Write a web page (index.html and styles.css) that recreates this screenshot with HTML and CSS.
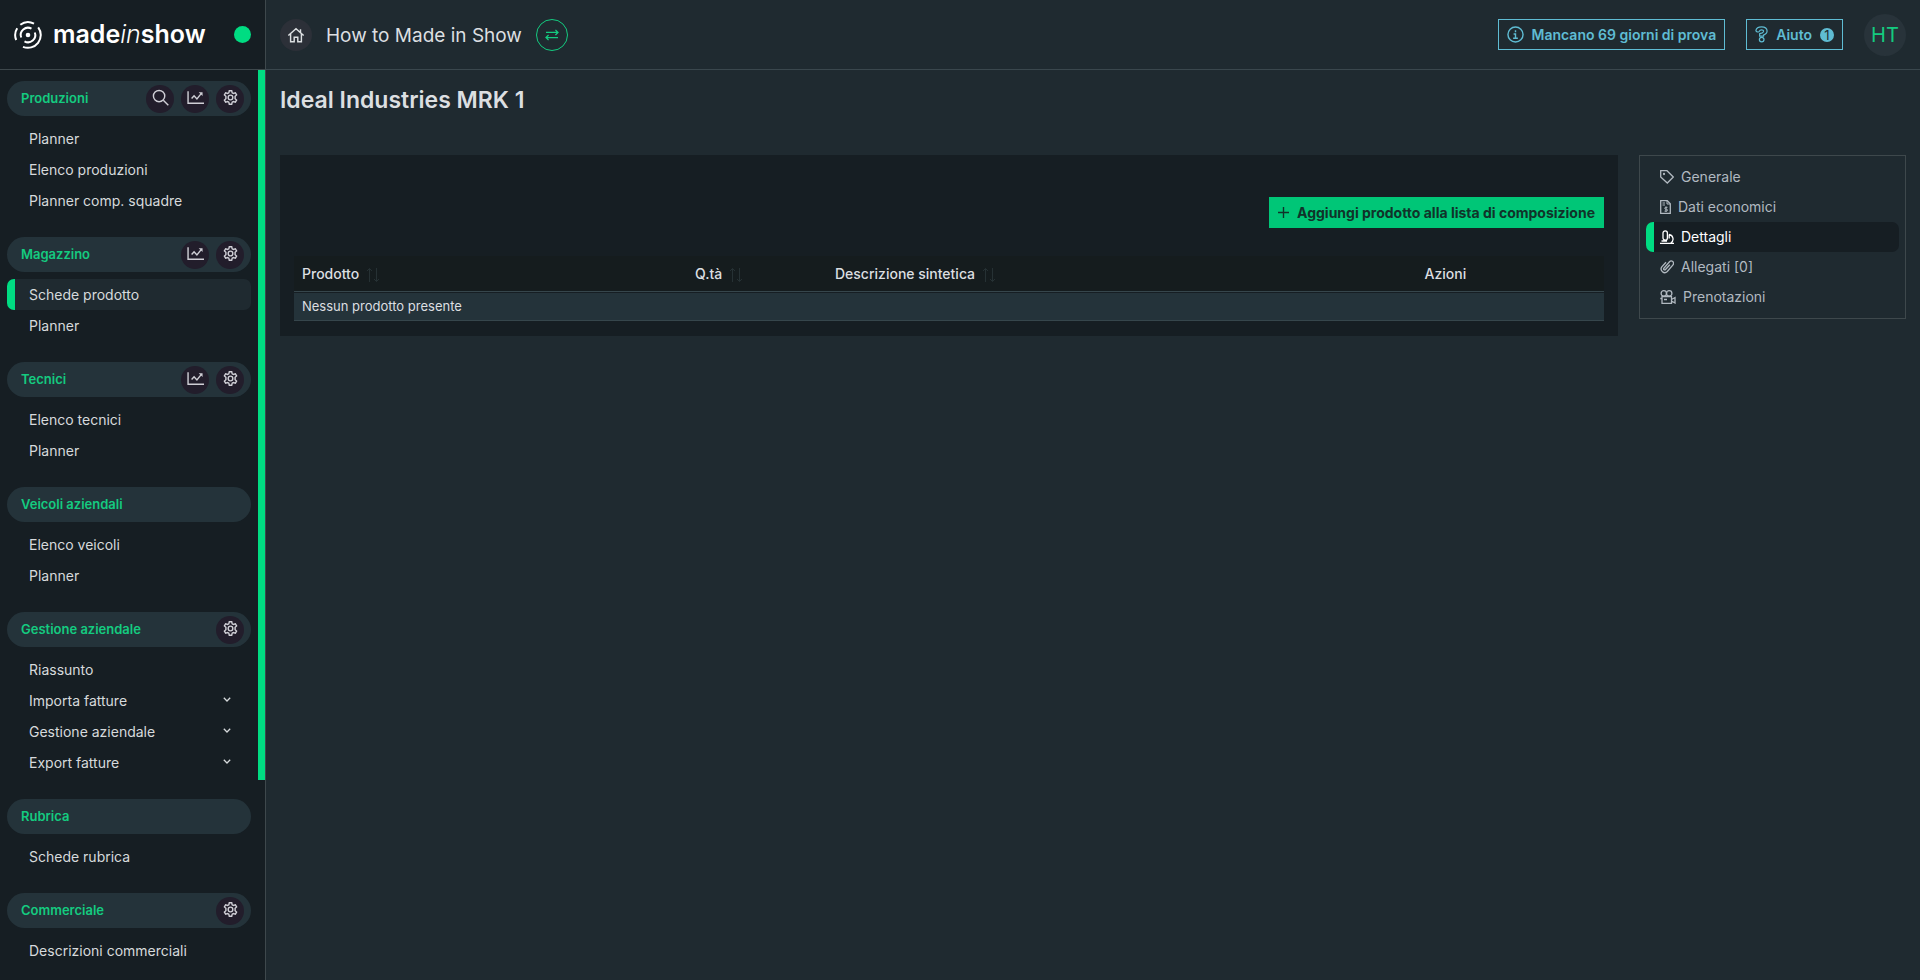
FILE: index.html
```html
<!DOCTYPE html>
<html lang="it">
<head>
  <meta charset="UTF-8">
  <title>Ideal Industries MRK 1 - madeinshow</title>
  <meta name="viewport" content="width=device-width, initial-scale=1.0">
  <link rel="stylesheet" href="styles.css">
</head>
<body>

<!-- icons used more than once -->
<svg class="sprite" aria-hidden="true">
  <symbol id="i-gear" viewBox="0 0 24 24">
    <path d="M10.300 2.500h3.400l.7 2.900 1.600.9 2.900-.9 1.700 2.900-2.100 2.100v3.200l2.100 2.100-1.700 2.900-2.900-.9-1.600.9-.7 2.900h-3.400l-.7-2.900-1.600-.9-2.900.9-1.700-2.900 2.100-2.100v-3.200L3.400 8.300l1.700-2.900 2.900.9 1.600-.9z"/>
    <circle cx="12" cy="12" r="3.300"/>
  </symbol>
  <symbol id="i-chart" viewBox="0 0 24 24">
    <path d="M1.500 3v17H24"/>
    <path d="M6.500 13.500l3.500-4 4 4.500 6-7.500"/>
    <path d="M16.500 4.500H22V10z" fill="currentColor" stroke="none"/>
  </symbol>
  <symbol id="i-down" viewBox="0 0 12 12">
    <path d="M2.800 3.800L6 7l3.200-3.200"/>
  </symbol>
  <symbol id="i-sort" viewBox="0 0 14 16">
    <path d="M3.500 15V1.500M1 4l2.500-2.500L6 4M10.500 1v13.500M8 12l2.500 2.500L13 12"/>
  </symbol>
</svg>

<div class="app">
  <aside class="sidebar">
    <div class="brand">
      <a class="logo" href="#">
        <svg class="logo-mark" viewBox="0 0 28 28">
          <circle cx="14" cy="14" r="2.300" class="dot"/>
          <path d="M7.200 16.500A7.200 7.200 0 0 1 17.500 7.700M20.800 11.500A7.200 7.200 0 0 1 10.500 20.300"/>
          <path d="M2.200 19A12.800 12.800 0 0 1 3.200 7.200M6.300 3.800A12.800 12.800 0 0 1 20 2.700M24.200 6.300A12.800 12.800 0 0 1 9 25.800"/>
        </svg>
        <span class="logo-text">made<i>in</i>show</span>
      </a>
      <span class="status"></span>
    </div>
    <div class="sidebar-body">
      <nav class="menu">
        <section>
          <div class="menu-head">
            <h2>Produzioni</h2>
            <button class="round" aria-label="Cerca"><svg viewBox="0 0 24 24"><circle cx="10" cy="10" r="8"/><path d="M16 16l7 7"/></svg></button>
            <button class="round" aria-label="Statistiche"><svg><use href="#i-chart"/></svg></button>
            <button class="round" aria-label="Impostazioni"><svg><use href="#i-gear"/></svg></button>
          </div>
          <a href="#">Planner</a>
          <a href="#">Elenco produzioni</a>
          <a href="#">Planner comp. squadre</a>
        </section>
        <section>
          <div class="menu-head">
            <h2>Magazzino</h2>
            <button class="round" aria-label="Statistiche"><svg><use href="#i-chart"/></svg></button>
            <button class="round" aria-label="Impostazioni"><svg><use href="#i-gear"/></svg></button>
          </div>
          <a href="#" class="active">Schede prodotto</a>
          <a href="#">Planner</a>
        </section>
        <section>
          <div class="menu-head">
            <h2>Tecnici</h2>
            <button class="round" aria-label="Statistiche"><svg><use href="#i-chart"/></svg></button>
            <button class="round" aria-label="Impostazioni"><svg><use href="#i-gear"/></svg></button>
          </div>
          <a href="#">Elenco tecnici</a>
          <a href="#">Planner</a>
        </section>
        <section>
          <div class="menu-head">
            <h2>Veicoli aziendali</h2>
          </div>
          <a href="#">Elenco veicoli</a>
          <a href="#">Planner</a>
        </section>
        <section>
          <div class="menu-head">
            <h2>Gestione aziendale</h2>
            <button class="round" aria-label="Impostazioni"><svg><use href="#i-gear"/></svg></button>
          </div>
          <a href="#">Riassunto</a>
          <a href="#">Importa fatture <svg class="caret"><use href="#i-down"/></svg></a>
          <a href="#">Gestione aziendale <svg class="caret"><use href="#i-down"/></svg></a>
          <a href="#">Export fatture <svg class="caret"><use href="#i-down"/></svg></a>
        </section>
        <section>
          <div class="menu-head">
            <h2>Rubrica</h2>
          </div>
          <a href="#">Schede rubrica</a>
        </section>
        <section>
          <div class="menu-head">
            <h2>Commerciale</h2>
            <button class="round" aria-label="Impostazioni"><svg><use href="#i-gear"/></svg></button>
          </div>
          <a href="#">Descrizioni commerciali</a>
        </section>
      </nav>
      <div class="rail"><div class="thumb"></div></div>
    </div>
  </aside>

  <div class="page">
    <header class="topbar">
      <a class="home" href="#" aria-label="Home"><svg viewBox="0 0 20 20"><path d="M1.500 10.500L10 3l8.500 7.500M4 9v8.500h4v-5h4v5h4V9M15 3.500v3.500"/></svg></a>
      <span class="company">How to Made in Show</span>
      <button class="swap" aria-label="Cambia azienda"><svg viewBox="0 0 16 14"><path d="M1 4h14M12 1l3 3-3 3M15 10H1M4 7l-3 3 3 3"/></svg></button>
      <div class="tools">
        <a class="btn-info" href="#">
          <svg class="ico" viewBox="0 0 18 18"><circle cx="9" cy="9" r="8"/><path d="M7 8.500h2V13M6.500 13h5M9 4.500v2"/></svg>
          Mancano 69 giorni di prova
        </a>
        <button class="btn-info">
          <svg class="ico ico-help" viewBox="0 0 14 18"><path d="M3.200 6.300A2 2 0 0 1 1 4.500C1.500 2 4 .8 7 .8c3.500 0 6 1.700 6 4.500 0 2.300-1.500 3.600-3.800 4.300v1.200H5V8.200l2.800-1C9 6.700 9.300 6 9.300 5.300 9.300 4.300 8.300 4 7 4c-1.500 0-2 .8-2.300 1.500-.3.600-.9.900-1.500.8z"/><circle cx="7.200" cy="14.500" r="2.500"/></svg>
          Aiuto
          <span class="count">1</span>
        </button>
        <a class="avatar" href="#">HT</a>
      </div>
    </header>

    <main class="content">
      <h1>Ideal Industries MRK 1</h1>
      <div class="columns">
        <div class="card">
          <div class="card-actions">
            <button class="btn-add"><svg viewBox="0 0 12 12"><path d="M6 0v12M0 6h12"/></svg>Aggiungi prodotto alla lista di composizione</button>
          </div>
          <table>
            <thead>
              <tr>
                <th class="c-prod">Prodotto <svg class="sort"><use href="#i-sort"/></svg></th>
                <th class="c-qty">Q.tà <svg class="sort"><use href="#i-sort"/></svg></th>
                <th class="c-desc">Descrizione sintetica <svg class="sort"><use href="#i-sort"/></svg></th>
                <th>Azioni</th>
              </tr>
            </thead>
            <tbody>
              <tr><td colspan="4">Nessun prodotto presente</td></tr>
            </tbody>
          </table>
        </div>

        <nav class="tabs">
          <a href="#"><svg width="14" height="14" viewBox="0 0 14 14"><path d="M.7.700H7l6.300 6.300-6 6L.7 7z"/><circle cx="4" cy="4" r=".5"/></svg>Generale</a>
          <a href="#"><svg width="11" height="14" viewBox="0 0 11 14"><path d="M.7.700h6.600l3 3v9.600H.7z"/><path class="thin" d="M2.500 3h2.500M2.500 5H5M7.500 7.300H5.700a.9.900 0 0 0 0 1.900h.8a.9.900 0 0 1 0 1.900H4.500M6 6.500v5.500M7 1v3h3"/></svg>Dati economici</a>
          <a href="#" class="active"><svg width="14" height="14" viewBox="0 0 14 14"><path d="M3 3a2.200 2.200 0 0 1 4.400 0v5a2.200 2.200 0 0 1-4.400 0zM0 13.300h14M1.500 11h5.500M9 4.500a4.600 4.600 0 0 1 1.800 8.500M9.200 4.500v4"/></svg>Dettagli</a>
          <a href="#"><svg width="14" height="14" viewBox="0 0 14 14"><path d="M9.800 4.800L5.500 9.500a1 1 0 0 1-1.600-1.300L8.200 3.300M8.200 3.300l1.300-1.500a2.300 2.300 0 0 1 3.500 3l-5.700 6.700a3.600 3.600 0 0 1-5.500-4.600L6 2.200"/></svg>Allegati [0]</a>
          <a href="#"><svg width="16" height="14" viewBox="0 0 16 14"><circle cx="3.800" cy="3.400" r="2.700"/><circle cx="9.200" cy="3.400" r="2.700"/><path d="M2 6.500h9.500v6.800H2zM.3 8.500H2M11.500 9.500l3.500-2v5.500l-3.500-2M4 9.500h3"/></svg>Prenotazioni</a>
        </nav>
      </div>
    </main>
  </div>
</div>

</body>
</html>
```
FILE: styles.css
```css
* {
  box-sizing: border-box;
}
body {
  margin: 0;
  background: #1f2a30;
  color: #dcdfe1;
  font-family: Inter, "Liberation Sans", sans-serif;
  font-size: 14px;
  line-height: 21px;
}
h1, h2 {
  margin: 0;
}
a {
  color: inherit;
  text-decoration: none;
}
button {
  font-family: inherit;
  cursor: pointer;
}
svg {
  flex-shrink: 0;
  fill: none;
  stroke: currentColor;
}
.sprite {
  display: none;
}
.app {
  display: flex;
  height: 100vh;
}

/* sidebar */
.sidebar {
  display: flex;
  flex-direction: column;
  width: 266px;
  flex-shrink: 0;
  background: #161e23;
  border-right: 1px solid #3e484c;
}
.brand {
  display: flex;
  align-items: center;
  justify-content: space-between;
  height: 70px;
  flex-shrink: 0;
  padding: 0 14px;
  border-bottom: 1px solid #3e484c;
}
.logo {
  display: flex;
  align-items: center;
  gap: 11px;
  color: #fff;
}
.logo-mark {
  width: 28px;
  height: 28px;
  stroke-width: 2;
}
.logo-mark .dot {
  fill: #fff;
  stroke: none;
}
.logo-text {
  font-size: 25px;
  font-weight: 600;
}
.logo-text i {
  font-weight: 300;
}
.status {
  width: 17px;
  height: 17px;
  border-radius: 50%;
  background: #00dc82;
}
.sidebar-body {
  display: flex;
  flex: 1;
  min-height: 0;
}
.menu {
  flex: 1;
  padding: 11px 7px 0;
  overflow: hidden;
}
.menu section {
  margin-bottom: 21px;
}
.menu-head {
  display: flex;
  align-items: center;
  gap: 7px;
  height: 35px;
  margin-bottom: 7px;
  padding: 0 7px 0 14px;
  border-radius: 18px;
  background: #24333a;
}
.menu-head h2 {
  flex: 1;
  color: #14cb80;
  font-size: 13px;
  font-weight: 600;
}
.round {
  display: flex;
  align-items: center;
  justify-content: center;
  width: 28px;
  height: 28px;
  padding: 0 0 2px;
  border: 0;
  border-radius: 50%;
  background: #221d2b;
  color: #d0cfd6;
}
.round svg {
  width: 17px;
  height: 17px;
  stroke-width: 2;
}
.menu a {
  display: flex;
  align-items: center;
  justify-content: space-between;
  height: 31px;
  padding: 0 18px 0 22px;
  color: #d6dadc;
}
.menu a.active {
  padding-left: 14px;
  border-left: 8px solid #00dc82;
  border-radius: 7px;
  background: #1f2a30;
}
.caret {
  width: 12px;
  height: 12px;
  margin-bottom: 2px;
  stroke-width: 1.3;
}
.rail {
  width: 7px;
}
.thumb {
  height: 78%;
  background: #00dc82;
}

/* top bar */
.page {
  flex: 1;
  min-width: 0;
}
.topbar {
  display: flex;
  align-items: center;
  gap: 14px;
  height: 70px;
  padding: 0 14px;
  border-bottom: 1px solid #3a474d;
}
.home {
  display: flex;
  align-items: center;
  justify-content: center;
  width: 32px;
  height: 32px;
  border-radius: 50%;
  background: #2c3038;
}
.home svg {
  width: 18px;
  height: 18px;
  stroke-width: 1.6;
}
.company {
  padding-top: 2px;
  font-size: 19px;
}
.swap {
  display: flex;
  align-items: center;
  justify-content: center;
  width: 32px;
  height: 32px;
  padding: 0;
  border: 1px solid #14cb80;
  border-radius: 50%;
  background: none;
  color: #14cb80;
}
.swap svg {
  width: 14px;
  height: 12px;
  stroke-width: 1.5;
}
.tools {
  display: flex;
  align-items: center;
  gap: 21px;
  margin-left: auto;
}
.btn-info {
  display: flex;
  align-items: center;
  gap: 8px;
  height: 31px;
  padding: 0 8px;
  border: 1px solid #5fbcd3;
  background: none;
  color: #5fbcd3;
  font-size: 14px;
  font-weight: 600;
}
.ico {
  width: 17px;
  height: 17px;
  stroke-width: 1.5;
}
.ico-help {
  width: 13px;
  stroke-width: 1.3;
}
.count {
  width: 14px;
  height: 14px;
  border-radius: 50%;
  background: #5fbcd3;
  color: #1f2a30;
  font-size: 13px;
  font-weight: 400;
  line-height: 14px;
  text-align: center;
}
.avatar {
  width: 42px;
  height: 42px;
  border-radius: 50%;
  background: #28333a;
  color: #14cb80;
  font-size: 20px;
  line-height: 42px;
  text-align: center;
}

/* content */
.content {
  padding: 14px;
}
h1 {
  margin-bottom: 38px;
  font-size: 23px;
  font-weight: 600;
  line-height: 33px;
}
.columns {
  display: flex;
  align-items: flex-start;
  gap: 21px;
}
.card {
  flex: 1;
  min-width: 0;
  padding: 42px 14px 15px;
  background: #161e23;
}
.card-actions {
  display: flex;
  justify-content: flex-end;
  margin-bottom: 28px;
}
.btn-add {
  display: flex;
  align-items: center;
  gap: 8px;
  height: 31px;
  padding: 0 9px;
  border: 0;
  background: #00c677;
  color: #10332a;
  font-size: 14px;
  font-weight: 700;
}
.btn-add svg {
  width: 11px;
  height: 11px;
  stroke-width: 1.5;
}
table {
  width: 100%;
  border-collapse: separate;
  border-spacing: 0;
  table-layout: fixed;
}
th {
  height: 36px;
  padding: 0 8px;
  border-bottom: 1px solid #36464c;
  background: #151c1e;
  font-weight: 500;
  text-align: left;
}
td {
  height: 29px;
  padding: 0 8px;
  border-top: 1px solid #161e23;
  border-bottom: 1px solid #36464c;
  background: #24333a;
  font-size: 13px;
}
.c-prod {
  width: 30%;
}
.c-qty {
  width: 140px;
}
.c-desc {
  width: 45%;
}
.sort {
  width: 14px;
  height: 16px;
  margin-left: 3px;
  color: #263134;
  vertical-align: middle;
}

/* product tabs */
.tabs {
  width: 267px;
  padding: 6px;
  border: 1px solid #3e484c;
}
.tabs a {
  display: flex;
  align-items: center;
  gap: 7px;
  height: 30px;
  padding-left: 14px;
  padding-bottom: 1px;
  color: #b1b9c0;
}
.tabs svg {
  stroke-width: 1.3;
}
.tabs .thin {
  stroke-width: 1;
}
.tabs a.active {
  padding-left: 6px;
  border-left: 8px solid #00dc82;
  border-radius: 7px;
  background: #161e23;
  color: #fff;
}
```
